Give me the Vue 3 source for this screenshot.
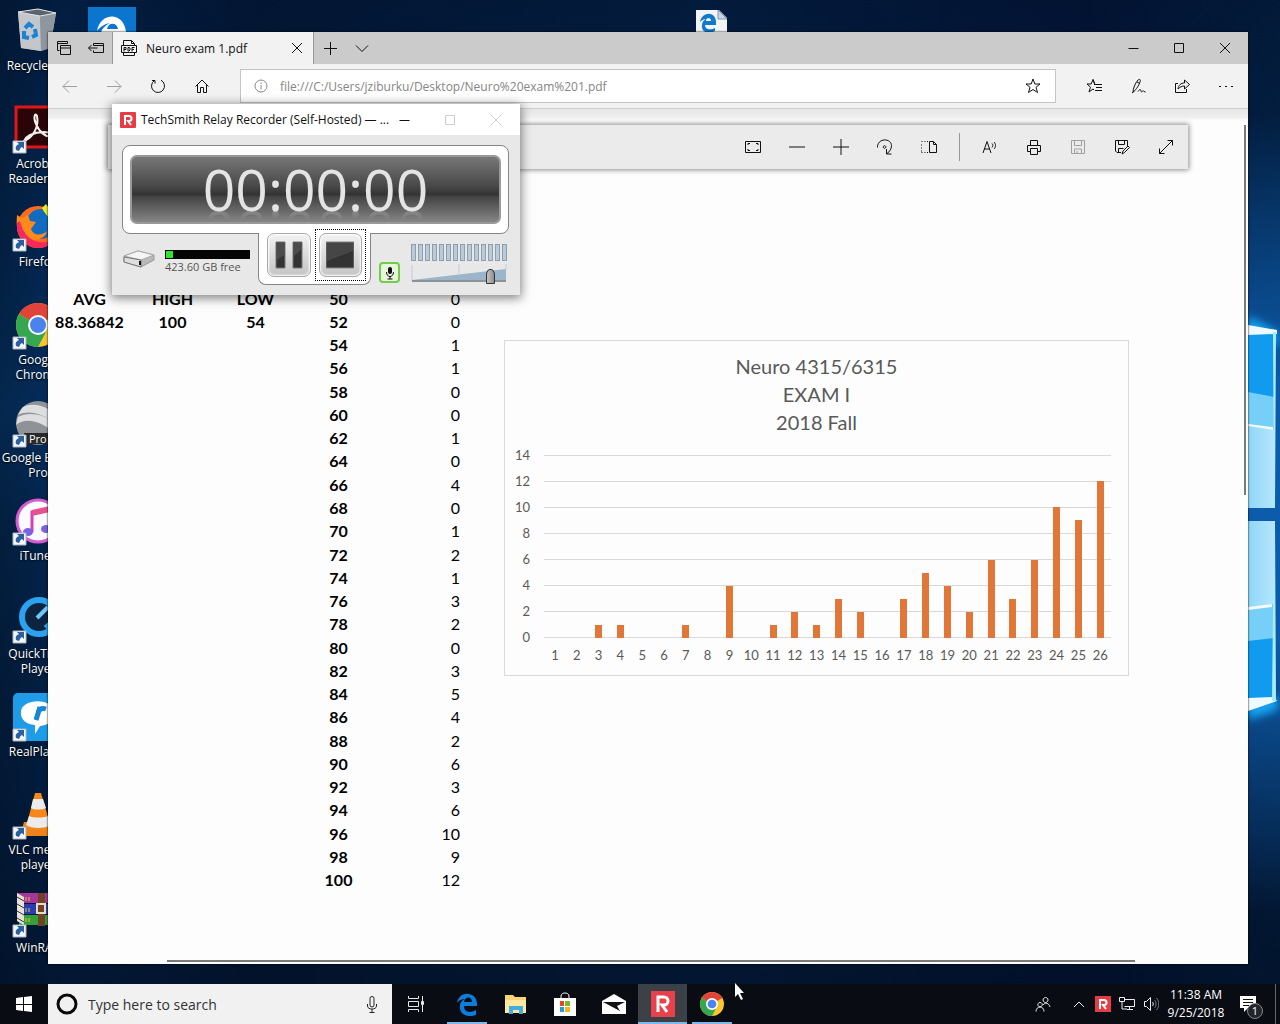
<script setup>
import { ref } from 'vue'

const address = ref('file:///C:/Users/jziburku/Desktop/Neuro%20exam%201.pdf')
const query = ref('')
const volume = ref(86)

const desktopIcons = [
  { id: 'bin', label: 'Recycle Bin', shortcut: false },
  { id: 'acrobat', label: 'Acrobat Reader DC', shortcut: true },
  { id: 'firefox', label: 'Firefox', shortcut: true },
  { id: 'chrome', label: 'Google Chrome', shortcut: true },
  { id: 'earth', label: 'Google Earth Pro', shortcut: true },
  { id: 'itunes', label: 'iTunes', shortcut: true },
  { id: 'quicktime', label: 'QuickTime Player', shortcut: true },
  { id: 'realplayer', label: 'RealPlayer', shortcut: true },
  { id: 'vlc', label: 'VLC media player', shortcut: true },
  { id: 'winrar', label: 'WinRAR', shortcut: true },
]

const tabTools = [
  { label: 'Tabs you have set aside', d: 'M3.5 10.5h-2v-9h10v2M1.5 3.5h10M4.5 5.5h10v9h-10zM4.5 8h10' },
  { label: 'Set these tabs aside', d: 'M5.5 5.5v-2h10v9h-10v-2M5.5 5.5h10M.5 8h9M3.5 5l-3 3 3 3' },
]
const newTabTools = [
  { label: 'New tab', d: 'M8.5 2v13M2 8.5h13' },
  { label: 'Show tab previews', d: 'M2 5.5l6 6 6-6' },
]
const windowTools = [
  { label: 'Minimize', d: 'M3.5 8.5h10' },
  { label: 'Maximize', d: 'M3.5 3.5h9v9h-9z' },
  { label: 'Close', d: 'M3 3l10 10M13 3L3 13' },
]
const navTools = [
  { label: 'Back', faint: true, d: 'M1 8.5h14M7 2.500L1 8.500l6 6' },
  { label: 'Forward', faint: true, d: 'M1 8.5h14M9 2.500l6 6-6 6' },
  { label: 'Refresh', d: 'M4.5 2.5A6.500 6.500 0 1 0 11 2.200M2 2.500h3v3' },
  { label: 'Home', d: 'M1.5 8.5L8 2l6.500 6.500M3.500 7v7.500h3v-5h3v5h3V7' },
]
const hubTools = [
  { label: 'Favorites', d: 'M9 6.5h7M10 9.5h6M9 12.5h7M8 6.500H9L7 1.500 5.200 6H1l3.500 3.200L3 14l4-3 1 .8M7 1.500l1.500 4.300' },
  { label: 'Add notes', d: 'M3 14.500c0-4 2-9 5-12.500 2-1.500 3 0 2 2-1 3-3 6-5 8.500l-3 2.500M7 4l2 1M8 13.500c2-3 3-2 3 0 1 1 2-2 3 0l1.500.5' },
  { label: 'Share', d: 'M4 5.500H1.500v9h11V11M4 11c.5-4 3-6 6.500-6V2l5 4.500-5 4.500V8C8 8 6 9 4 11z' },
  { label: 'Settings and more', d: 'M1 8.5h2M7 8.5h2M13 8.5h2' },
]
const pdfTools = [
  { label: 'Fit to page', d: 'M.5 2.5h15v11H.5zM3 6V4.500h2M11 4.500h2V6M13 10v1.500h-2M5 11.500H3V10' },
  { label: 'Zoom out', d: 'M0 8h16' },
  { label: 'Zoom in', d: 'M0 8h16M8 0v16' },
  { label: 'Rotate', d: 'M.5 8.500C0-1 14-1.500 14.500 6.500c0 3-1.500 6-4.500 8M9.500 10v5h5M7.500 6.700a1.300 1.300 0 1 0 .1 0z' },
  { label: 'Layout', d: 'M8.5 2.5h4l3 3v8h-7zM12.500 2.500v3h3M.5 2.500h1M3.500 2.500h1M6 2.500h1M.5 5.500v1M.5 8.500v1M.5 11.500v1M.5 13.500h1M3.500 13.500h1M6 13.500h1' },
]
const fileTools = [
  { label: 'Read aloud', d: 'M1 14L5 2.500 9 14M2.300 10h5.400M10 4.500c1 1 1 3 0 4M12 3c2 2 2 5 0 7' },
  { label: 'Print', d: 'M4.5 6V1.5h7V6M4.500 12.500h-3V6.500h13v6h-3M4.500 9.500h7v6h-7z' },
  { label: 'Save', faint: true, d: 'M1.5 1.5h13v13h-13zM4.500 1.500v5h7v-5M4.500 14.500v-4.500h7v4.500M7 12v2' },
  { label: 'Save as', d: 'M7 13.500H3l-1.500-1.500V1.500h12V7M4.500 1.500v4h6v-4M4.500 13.500V9.500h5M8 15l1-3 5-5 1.500 1.500-5 5z' },
  { label: 'Full screen', d: 'M1.500 14.500l13-13M9.500 1.500h5v5M1.500 9.500v5h5' },
]

const counts = [0, 0, 1, 1, 0, 0, 1, 0, 4, 0, 1, 2, 1, 3, 2, 0, 3, 5, 4, 2, 6, 3, 6, 10, 9, 12]
const rows = counts.map((count, i) => ({ score: 50 + i * 2, count }))
const ticks = [14, 12, 10, 8, 6, 4, 2, 0]
const axisMax = 14
</script>

<template>
  <div class="screen">
    <main class="desktop">
      <svg class="light" width="32" height="460" viewBox="0 0 32 460" aria-hidden="true">
        <defs>
          <linearGradient id="pane" x1="0" y1="0" x2="1" y2="0">
            <stop offset="0" stop-color="#8fd6f7" />
            <stop offset="1" stop-color="#b4e6fc" />
          </linearGradient>
          <filter id="soft" x="-50%" y="-50%" width="200%" height="200%"><feGaussianBlur stdDeviation="4" /></filter>
        </defs>
        <path d="M0 32l30 16v14L0 60zM0 436l30-10v-14L0 418z" fill="#19a5f5" filter="url(#soft)" />
        <path d="M0 49h27v175H0z" fill="#119bee" />
        <path d="M0 108l26 5v111H0z" fill="#75cff6" />
        <path d="M0 142l26 4v78H0z" fill="url(#pane)" />
        <path d="M0 140l25 3v3l-25-4z" fill="#f3fbff" />
        <path d="M0 237h26v177H0z" fill="#119bee" />
        <path d="M0 237h26v117l-26 3z" fill="#75cff6" />
        <path d="M0 237h26v83l-26 4z" fill="url(#pane)" />
        <path d="M0 323l24-3v3l-24 3z" fill="#f3fbff" />
        <path d="M0 41l29 5v4H26L0 51zM0 414l26-1 3 4-29 10z" fill="#effaff" />
        <path d="M25 48h3l-1 176h-1zM26 237h1l1 180h-4z" fill="#a9ecff" />
      </svg>

      <ul class="icons">
        <li v-for="item in desktopIcons" :key="item.id" class="shortcut">
          <svg class="shortcut-art" viewBox="0 0 48 48" aria-hidden="true">
            <g v-if="item.id === 'bin'">
              <path d="M4 4l20-3 18 4-6 35-9 3-20-3z" fill="#a9afb6" />
              <path d="M4 4l22 4 1 35-20-3z" fill="#c3c7cb" />
              <path d="M26 8l16-3-6 35-9 3z" fill="#8e969f" />
              <path d="M4 4l20-3 18 4-16 3z" fill="#5b636c" stroke="#e2e5e8" />
              <path d="M11 20l4-4 4 3M21 21l1 6-4 2M15 30l-5-1v-6" fill="none" stroke="#1b83d6" stroke-width="4" />
            </g>
            <g v-else-if="item.id === 'acrobat'">
              <path d="M2 1h44v40H2z" fill="#2a0406" stroke="#e0161b" stroke-width="3" />
              <path d="M10 35c10-4 15-15 13-25-2-4-4 1-1 8s9 14 16 12-8-7-22-1c-4 2-5 4-6 6z" fill="none" stroke="#f4eeee" stroke-width="2" />
            </g>
            <g v-else-if="item.id === 'firefox'">
              <circle cx="24" cy="23" r="21" fill="#ff6a1c" />
              <circle cx="27" cy="20" r="15" fill="#126bc0" />
              <path d="M3 11l5 3 6-3 2 6 6 1-5 7c3 8 12 6 16 2-1 8-14 12-22 7S2 24 3 11z" fill="#ff8a1a" />
              <path d="M3 19c-1 13 7 24 21 25 7 0 14-3 18-9-14 7-31 4-36-18z" fill="#f5295d" />
              <path d="M28 4l4-4c3 5 15 11 12 25-3-7-12-12-16-21z" fill="#e9ec1f" />
            </g>
            <g v-else-if="item.id === 'chrome'">
              <circle cx="24" cy="23" r="22" fill="#fbc72e" />
              <path d="M24 23L5 12a22 22 0 0 1 38 0z" fill="#e0433a" />
              <path d="M24 23L5 12a22 22 0 0 0 19 33l8-15z" fill="#35a751" />
              <circle cx="24" cy="23" r="10" fill="#fff" />
              <circle cx="24" cy="23" r="8" fill="#4b83ec" />
            </g>
            <g v-else-if="item.id === 'earth'">
              <circle cx="24" cy="23" r="22" fill="#8f9297" />
              <path d="M4 15c12-6 25 0 38 8l-6-13C26 4 14 3 8 8zM2 25c11-9 27-2 39 8l4-6C33 14 15 11 4 17z" fill="#dcdee0" />
              <path d="M10 33h38v11H10z" fill="#292929" />
              <text x="15" y="43" class="art-text">Pro</text>
            </g>
            <g v-else-if="item.id === 'itunes'">
              <circle cx="24" cy="23" r="21" fill="#fbfbff" stroke="#d65bd1" stroke-width="3" />
              <path d="M18 34V14l18-4v20" fill="none" stroke="#d43fb8" stroke-width="3" />
              <path d="M18 12l18-4v6l-18 4z" fill="#e8508f" />
              <ellipse cx="14" cy="34" rx="5" ry="4" fill="#7b62e0" />
              <ellipse cx="32" cy="31" rx="5" ry="4" fill="#7b62e0" />
            </g>
            <g v-else-if="item.id === 'quicktime'">
              <circle cx="25" cy="21" r="17" fill="#0c2440" stroke="#2ba2ef" stroke-width="6" />
              <path d="M23 22L34 11" stroke="#6dc5fa" stroke-width="4" />
              <path d="M32 28l10 11" stroke="#2ba2ef" stroke-width="6" />
            </g>
            <g v-else-if="item.id === 'realplayer'">
              <rect width="48" height="48" x="-1" y="-1" rx="5" fill="#1f9ce8" />
              <path d="M7 17c2-12 28-14 34 0 2 9-6 14-15 15l-5 8v-9C12 30 6 26 7 17z" fill="#fff" />
              <path d="M22 26l4-13M24 18c2-4 5-4 8-3" fill="none" stroke="#1586d5" stroke-width="5" />
            </g>
            <g v-else-if="item.id === 'vlc'">
              <path d="M10 30h28l8 14H6z" fill="#f08319" />
              <path d="M21 1h6l10 34c-6 4-20 4-25 0z" fill="#f5871b" />
              <path d="M19 7h10l3 9c-4 2-12 2-15 0zM15 24c5 2 14 2 19 0l3 9c-6 4-20 4-25 0z" fill="#ebebea" />
            </g>
            <g v-else>
              <path d="M3 3h42v10H3z" fill="#a8369a" />
              <path d="M5 14h42v10H5z" fill="#283eb0" />
              <path d="M5 25h42v10H5z" fill="#35a03a" />
              <path d="M3 3l7 4v28l-7-4z" fill="#e8e3d8" />
              <path d="M3 7l7 4M3 14l7 4M3 21l7 4M3 28l7 4" stroke="#333" />
              <path d="M12 7v4M15 7v4M12 18v4M15 18v4M12 28v4M15 28v4" stroke="#e5c34a" />
              <path d="M24 3h7v33h-7z" fill="#704325" />
              <path d="M23 14h8v9h-8z" fill="none" stroke="#e7ddc5" stroke-width="2" />
            </g>
            <g v-if="item.shortcut">
              <path d="M-1 35h13v12H-1z" fill="#f3f6fa" stroke="#aab4c2" />
              <path d="M2 44c-1-4 1-5 3-6l-2-2h7v7l-2-2c-2 1-2 2-3 4z" fill="#2c5f9e" />
            </g>
          </svg>
          <span class="shortcut-label">{{ item.label }}</span>
        </li>
      </ul>

      <svg class="tile-edge" width="48" height="48" viewBox="0 0 48 48" aria-hidden="true">
        <path d="M0 0h48v48H0z" fill="#0c76cf" />
        <path d="M9 24C12 5 36 4 38 25v4H18c1 10 12 10 18 5v6c-14 6-26 0-23-14 1-5 5-8 9-10-6 1-10 4-13 8zm10-2h11c-1-7-10-7-11 0z" fill="#fff" />
      </svg>
      <svg class="tile-file" width="31" height="40" viewBox="0 0 31 40" aria-hidden="true">
        <path d="M0 0h23l8 8v32H0z" fill="#f3f4f6" />
        <path d="M22 0v9h9z" fill="#c3d5e6" stroke="#8299b0" />
        <path d="M4 12C6 1 20 1 20 12v3H9c0 5 6 5 10 3v3c-7 4-14 1-13-6 0-3 2-5 4-6-2 0-4 1-6 3zm6-1h5c0-4-5-4-5 0z" fill="#1278cc" />
      </svg>

      <section class="browser" aria-label="Microsoft Edge">
        <header class="tabbar">
          <button v-for="t in tabTools" :key="t.label" class="tool slim" :aria-label="t.label">
            <svg class="glyph" viewBox="0 0 16 16"><path :d="t.d" /></svg>
          </button>
          <div class="tab">
            <svg class="glyph" viewBox="0 0 16 16" aria-hidden="true">
              <path d="M2.500 5V.5h8l3 3V5M10.500.5v3h3M2.500 13v2.500h11V13M.5 5.500h15v7H.5z" />
              <path d="M3 11.500v-4h2v2H3M7 7.500v3.500h1l1-1V8L8 7.500zM11 11.500v-4h2.500M11 9.500h2" />
            </svg>
            <span class="tab-title">Neuro exam 1.pdf</span>
            <button class="tab-close" aria-label="Close tab">
              <svg class="glyph" viewBox="0 0 16 16"><path d="M3 3l10 10M13 3L3 13" /></svg>
            </button>
          </div>
          <button v-for="t in newTabTools" :key="t.label" class="tool slim" :aria-label="t.label">
            <svg class="glyph" viewBox="0 0 16 16"><path :d="t.d" /></svg>
          </button>
          <div class="spacer"></div>
          <button v-for="t in windowTools" :key="t.label" class="tool wide" :aria-label="t.label">
            <svg class="glyph" viewBox="0 0 16 16"><path :d="t.d" /></svg>
          </button>
        </header>

        <nav class="navbar">
          <button v-for="t in navTools" :key="t.label" class="tool" :class="{ faint: t.faint }" :aria-label="t.label">
            <svg class="glyph" viewBox="0 0 16 16"><path :d="t.d" /></svg>
          </button>
          <div class="address">
            <svg class="info" viewBox="0 0 14 14" aria-hidden="true">
              <circle cx="7" cy="7" r="6" /><path d="M7 6v4.500M7 3.500v1.500" />
            </svg>
            <input v-model="address" class="address-input" aria-label="Address" spellcheck="false" />
            <button class="tool" aria-label="Add to favorites">
              <svg class="glyph" viewBox="0 0 16 16"><path d="M8 1l1.800 5H15l-4 3.300 1.500 5.200L8 11.500l-4.500 3L5 9.300 1 6h5.200z" /></svg>
            </button>
          </div>
          <button v-for="t in hubTools" :key="t.label" class="tool" :aria-label="t.label">
            <svg class="glyph" viewBox="0 0 16 16"><path :d="t.d" /></svg>
          </button>
        </nav>

        <div class="page">
          <div class="pdfbar">
            <button v-for="t in pdfTools" :key="t.label" class="tool" :aria-label="t.label">
              <svg class="glyph" viewBox="0 0 16 16"><path :d="t.d" /></svg>
            </button>
            <span class="divider"></span>
            <button v-for="t in fileTools" :key="t.label" class="tool" :class="{ faint: t.faint }" :aria-label="t.label">
              <svg class="glyph" viewBox="0 0 16 16"><path :d="t.d" /></svg>
            </button>
          </div>

          <div class="sheet">
            <table class="scores">
              <tbody>
                <tr v-for="(r, i) in rows" :key="r.score">
                  <th>{{ i === 0 ? 'AVG' : i === 1 ? '88.36842' : '' }}</th>
                  <th>{{ i === 0 ? 'HIGH' : i === 1 ? '100' : '' }}</th>
                  <th>{{ i === 0 ? 'LOW' : i === 1 ? '54' : '' }}</th>
                  <th>{{ r.score }}</th>
                  <td>{{ r.count }}</td>
                </tr>
              </tbody>
            </table>

            <figure class="chart">
              <figcaption class="chart-title">Neuro 4315/6315<br />EXAM I<br />2018 Fall</figcaption>
              <div class="plot">
                <div class="y-axis"><span v-for="t in ticks" :key="t">{{ t }}</span></div>
                <div class="area">
                  <div class="gridlines"><i v-for="t in ticks" :key="t"></i></div>
                  <div class="bars">
                    <div v-for="(c, i) in counts" :key="i" class="slot">
                      <div class="bar" :style="{ height: (c / axisMax) * 100 + '%' }"></div>
                    </div>
                  </div>
                </div>
                <div class="x-axis"><span v-for="(c, i) in counts" :key="i">{{ i + 1 }}</span></div>
              </div>
            </figure>
          </div>
          <div class="scroll-v"></div>
          <div class="scroll-h"></div>
        </div>
      </section>

      <section class="recorder" aria-label="TechSmith Relay Recorder">
        <header class="rec-title">
          <svg class="rec-logo" viewBox="0 0 16 16" aria-hidden="true">
            <rect width="16" height="16" rx="1" fill="#e63c46" />
            <path d="M5 13V4h4a2.500 2.500 0 0 1 0 5H8l3 4" fill="none" stroke="#fff" stroke-width="2" />
          </svg>
          <span class="rec-name">TechSmith Relay Recorder (Self-Hosted) — ...</span>
          <button
            v-for="(t, i) in windowTools"
            :key="t.label"
            class="tool wide"
            :class="{ off: i > 0 }"
            :aria-label="t.label"
          >
            <svg class="glyph" viewBox="0 0 16 16"><path :d="t.d" /></svg>
          </button>
        </header>
        <div class="rec-body">
          <div class="rec-panel">
            <div class="display"><span class="time">00:00:00</span></div>
          </div>
          <div class="rec-row">
            <div class="disk">
              <svg class="drive" viewBox="0 0 34 22" aria-hidden="true">
                <path d="M2 8L16 3l16 4v5l-13 7-17-5z" fill="#b9b9b9" stroke="#999" />
                <path d="M2 8l14-5 16 4-13 5z" fill="#f5f5f5" stroke="#aaa" />
                <path d="M2 9l17 3v7L2 14z" fill="#dedede" stroke="#777" />
                <path d="M18 13v4" stroke="#111" stroke-width="2" />
              </svg>
              <div class="disk-info">
                <div class="disk-bar"><div class="disk-used"></div></div>
                <span class="disk-text">423.60 GB free</span>
              </div>
            </div>
            <div class="controls">
              <button class="key" aria-label="Pause">
                <svg viewBox="0 0 28 28" width="28" height="28">
                  <path d="M1 1h9v26H1zM18 1h9v26h-9z" fill="#333" stroke="#777" />
                  <path d="M2 2h7v12l-7 5zM19 2h7v7l-7 6z" fill="#4b4b4b" />
                </svg>
              </button>
              <button class="key focused" aria-label="Stop">
                <svg viewBox="0 0 28 28" width="28" height="28">
                  <path d="M0 1h28v26H0z" fill="#333" stroke="#888" />
                  <path d="M1 2h26v8L1 20z" fill="#464646" />
                </svg>
              </button>
            </div>
            <div class="sound">
              <button class="mic" aria-label="Microphone">
                <svg viewBox="0 0 14 14" width="14" height="14">
                  <rect x="5" y="1" width="4" height="7" rx="2" fill="#111" />
                  <path d="M3.500 6c0 6 7 6 7 0M7 10v3M4.500 13h5" fill="none" stroke="#111" />
                </svg>
              </button>
              <div class="levels">
                <div class="meter"><i v-for="n in 14" :key="n"></i></div>
                <div class="fader">
                  <svg class="wedge" viewBox="0 0 96 20" preserveAspectRatio="none" aria-hidden="true">
                    <path d="M1 16L95 5v11z" fill="#9db5ca" />
                    <path d="M1 1v16M48 0v10M95 0v5" stroke="#c3ccd4" />
                    <path d="M1 17h94" stroke="#8d9297" stroke-width="2" />
                  </svg>
                  <input v-model="volume" class="volume" type="range" min="0" max="100" aria-label="Volume" />
                </div>
              </div>
            </div>
          </div>
        </div>
      </section>
    </main>

    <footer class="taskbar">
      <button class="task" aria-label="Start">
        <svg width="16" height="16" viewBox="0 0 16 16"><path d="M0 2l7-1v7H0zM8 1l8-1v8H8zM0 9h7v6l-7-1zM8 9h8v7l-8-1z" fill="#fff" /></svg>
      </button>
      <div class="search">
        <svg width="22" height="22" viewBox="0 0 22 22" aria-hidden="true"><circle cx="11" cy="11" r="9" fill="none" stroke="#0a0a0a" stroke-width="3" /></svg>
        <input v-model="query" class="search-input" placeholder="Type here to search" aria-label="Search" />
        <svg width="14" height="18" viewBox="0 0 14 18" aria-hidden="true">
          <path d="M5 3.500a2 2 0 0 1 4 0V10a2 2 0 0 1-4 0zM2.500 9v2c0 4 9 4 9 0V9M7 14v3.500M4.500 17.500h5" fill="none" stroke="#222" />
        </svg>
      </div>
      <button class="task" aria-label="Task view">
        <svg width="18" height="18" viewBox="0 0 18 18"><path d="M1.500 1v2.500h10V1M1.500 17v-2.500h10V17M1.500 6.500h10v5h-10zM15.500 1v16M14.500 6.500h2v3h-2z" fill="none" stroke="#e8e8e8" /></svg>
      </button>
      <div class="apps">
        <button class="app open" aria-label="Microsoft Edge">
          <svg width="24" height="24" viewBox="0 0 24 24">
            <path d="M2 11C4-2 22-1 22 12v2H9c0 7 7 7 12 4v5C13 26 4 23 5 14c0-4 3-6 5-7-3 0-6 1-8 4zm7-1h8c0-6-7-6-8 0z" fill="#0d7ddb" />
          </svg>
        </button>
        <button class="app" aria-label="File Explorer">
          <svg width="24" height="24" viewBox="0 0 24 24">
            <path d="M1 3h8l2 2h11v16H1z" fill="#f7d775" /><path d="M1 8h21v13H1z" fill="#fce89f" />
            <path d="M5 22v-8h14v8h-4v-4H9v4z" fill="#45acdf" />
          </svg>
        </button>
        <button class="app" aria-label="Microsoft Store">
          <svg width="24" height="24" viewBox="0 0 24 24">
            <path d="M8 7V4c0-4 8-4 8 0v3" fill="none" stroke="#fff" /><path d="M1 6h22v18H1z" fill="#fff" />
            <path d="M7 9h4v5H7z" fill="#e8452c" /><path d="M12 9h5v5h-5z" fill="#7db928" />
            <path d="M7 15h4v5H7z" fill="#1b9fe0" /><path d="M12 15h5v5h-5z" fill="#f5b616" />
          </svg>
        </button>
        <button class="app" aria-label="Mail">
          <svg width="24" height="24" viewBox="0 0 24 24"><path d="M0 9l12-7 12 7v13H0z" fill="#fff" /><path d="M1 10h22l-8 4 3 5z" fill="#101217" /></svg>
        </button>
        <button class="app open active" aria-label="TechSmith Relay Recorder">
          <svg width="24" height="26" viewBox="0 0 24 26"><path d="M0 0h24v26H0z" fill="#e8414c" /><path d="M7 21V6h6a4 4 0 0 1 0 8h-2l5 7" fill="none" stroke="#fff" stroke-width="3" /></svg>
        </button>
        <button class="app open" aria-label="Google Chrome">
          <svg width="24" height="24" viewBox="2 1 44 44">
            <circle cx="24" cy="23" r="22" fill="#fbc72e" />
            <path d="M24 23L5 12a22 22 0 0 1 38 0z" fill="#e0433a" />
            <path d="M24 23L5 12a22 22 0 0 0 19 33l8-15z" fill="#35a751" />
            <circle cx="24" cy="23" r="11" fill="#fff" /><circle cx="24" cy="23" r="8" fill="#4b83ec" />
          </svg>
        </button>
      </div>
      <div class="spacer"></div>
      <div class="tray">
        <button class="tray-item people" aria-label="People">
          <svg width="16" height="16" viewBox="0 0 16 16"><path d="M10.500 1.500a2.500 2.500 0 1 0 .1 0zM8 9c2-3 6-2 7 2M5 6.500a2.200 2.200 0 1 0 .1 0zM1 15.500c0-6 8-6 8 0" fill="none" stroke="#eee" /></svg>
        </button>
        <button class="tray-item" aria-label="Show hidden icons">
          <svg width="12" height="12" viewBox="0 0 12 12"><path d="M1 9l5-5 5 5" fill="none" stroke="#eee" /></svg>
        </button>
        <button class="tray-item" aria-label="TechSmith Relay">
          <svg width="16" height="16" viewBox="0 0 16 16"><path d="M0 0h16v16H0z" fill="#e63c46" /><path d="M5 13V4h4a2.500 2.500 0 0 1 0 5H8l3 4" fill="none" stroke="#fff" stroke-width="2" /></svg>
        </button>
        <button class="tray-item" aria-label="Network">
          <svg width="16" height="16" viewBox="0 0 16 16"><path d="M5.500 3.500h10v7h-10M8 13.500h6M10.500 11v3M.5 1.500h5v4h-5zM3 6v7h5" fill="none" stroke="#eee" /></svg>
        </button>
        <button class="tray-item" aria-label="Volume">
          <svg width="16" height="16" viewBox="0 0 16 16"><path d="M1.500 5.500h2l4-4v13l-4-4h-2zM9.500 6c1 1 1 3 0 4" fill="none" stroke="#eee" /><path d="M11.500 4c2 2 2 6 0 8M13.500 2c3 3 3 9 0 12" fill="none" stroke="#777" /></svg>
        </button>
        <time class="clock" datetime="2018-09-25T11:38">11:38 AM<br />9/25/2018</time>
        <button class="notice" aria-label="Notifications">
          <svg width="18" height="18" viewBox="0 0 18 18"><path d="M1 1h16v12H9l-4 4v-4H1z" fill="#fff" /><path d="M4 4.500h10M4 7.500h10M4 10.500h6" stroke="#111" /></svg>
          <span class="badge">1</span>
        </button>
      </div>
      <svg class="cursor" width="12" height="18" viewBox="0 0 12 18" aria-hidden="true"><path d="M1 0v14l3-3 3 6 2-1-3-6h4z" fill="#fff" /></svg>
    </footer>
  </div>
</template>

<style>
body {
  margin: 0;
  background: #03132c;
}
</style>

<style scoped>
.screen {
  display: flex;
  flex-direction: column;
  min-height: 100vh;
  overflow: hidden;
  font-family: "Open Sans", "Noto Sans", sans-serif;
  font-size: 12px;
  color: #111;
}
.screen * {
  box-sizing: border-box;
}
button {
  padding: 0;
  border: 0;
  background: none;
  color: inherit;
  font: inherit;
}
input {
  font: inherit;
}
svg {
  flex: none;
}
.spacer {
  flex: 1;
}

/* Desktop */
.desktop {
  position: relative;
  flex: 1;
  display: flex;
  padding: 32px 32px 20px 48px;
  background:
    radial-gradient(ellipse 420px 400px at 100% 515px, #0d5cab 30%, rgba(10, 70, 140, 0) 100%),
    linear-gradient(180deg, rgba(2, 15, 40, .5) 0, rgba(3, 32, 75, .2) 28%, rgba(6, 50, 100, .4) 42%, rgba(3, 24, 55, .3) 55%, rgba(2, 14, 35, .7) 100%),
    linear-gradient(90deg, #03203f 0, #042b5a 5%, #031b3c 20%, #04264f 55%, #03153a 85%, #032448 100%);
}
.light {
  position: absolute;
  right: 0;
  top: 284px;
}
.icons {
  position: absolute;
  left: 0;
  top: 8px;
  width: 76px;
  margin: 0;
  padding: 0;
  list-style: none;
}
.shortcut {
  display: flex;
  flex-direction: column;
  align-items: center;
  gap: 2px;
  height: 98px;
}
.shortcut-art {
  width: 48px;
  height: 48px;
  overflow: visible;
}
.shortcut-label {
  color: #fff;
  line-height: 15px;
  text-align: center;
  text-shadow: 0 1px 2px #000;
}
.art-text {
  font-size: 11px;
  fill: #fff;
}
.tile-edge {
  position: absolute;
  left: 88px;
  top: 7px;
}
.tile-file {
  position: absolute;
  left: 696px;
  top: 10px;
}

/* Shared icon buttons */
.tool {
  display: flex;
  flex: none;
  align-items: center;
  justify-content: center;
  width: 44px;
  height: 100%;
}
.slim {
  width: 32px;
}
.wide {
  width: 46px;
}
.glyph {
  width: 16px;
  height: 16px;
  fill: none;
  stroke: #111;
  overflow: visible;
}
.faint .glyph {
  stroke: #a0a0a0;
}
.off .glyph {
  stroke: #ccc;
}

/* Browser */
.browser {
  position: relative;
  flex: 1;
  display: flex;
  flex-direction: column;
  min-width: 0;
  background: #fdfdfd;
  box-shadow: 0 0 2px #000;
}
.tabbar {
  display: flex;
  height: 32px;
  background: #cbcbcb;
}
.tab {
  display: flex;
  align-items: center;
  gap: 9px;
  width: 202px;
  padding: 0 8px;
  border: solid #999;
  border-width: 0 1px;
  background: #f2f2f2;
}
.tab-title {
  flex: 1;
  white-space: nowrap;
}
.tab-close {
  display: flex;
}
.navbar {
  display: flex;
  align-items: center;
  height: 45px;
  border-bottom: 1px solid #cfcfcf;
  background: #f2f2f2;
}
.address {
  display: flex;
  flex: 1;
  align-items: center;
  height: 34px;
  margin: 0 16px;
  padding-left: 13px;
  border: 1px solid #c4c4c4;
  background: #fff;
}
.info {
  width: 14px;
  height: 14px;
  fill: none;
  stroke: #8a8a8a;
}
.address-input {
  flex: 1;
  min-width: 0;
  margin-left: 12px;
  padding: 0;
  border: 0;
  outline: 0;
  background: none;
  color: #858585;
}
.page {
  position: relative;
  flex: 1;
  background: linear-gradient(#e6e6e6, #f0f0f0 9px, #fdfdfd 11px);
}
.pdfbar {
  display: flex;
  align-items: center;
  justify-content: flex-end;
  height: 44px;
  margin: 16px 60px 0;
  background: #ebebeb;
  box-shadow: 0 0 5px 1px rgba(0, 0, 0, .45);
}
.divider {
  width: 1px;
  height: 28px;
  margin: 0 8px;
  background: #999;
}
.sheet {
  display: flex;
  align-items: flex-start;
  padding: 118px 119px 60px 0;
  font-family: Lato, "Open Sans", sans-serif;
}
.scores {
  flex: none;
  width: 412px;
  height: 605px;
  table-layout: fixed;
  border-collapse: collapse;
  font-size: 16px;
  line-height: 20px;
  color: #000;
}
.scores th,
.scores td {
  width: 83px;
  padding: 0;
  text-align: center;
}
.scores td {
  width: 80px;
  text-align: right;
}
.chart {
  flex: 1;
  min-width: 0;
  margin: 53px 0 0 44px;
  padding: 11px 0 8px;
  border: 1px solid #dadada;
  color: #595959;
}
.chart-title {
  font-size: 20px;
  line-height: 28px;
  text-align: center;
}
.plot {
  display: grid;
  grid-template-columns: 19px 1fr;
  column-gap: 14px;
  margin: 6px 17px 0 6px;
  font-size: 13px;
}
.y-axis {
  display: flex;
  flex-direction: column;
  height: 201px;
  line-height: 26px;
  text-align: right;
}
.area {
  display: grid;
  padding: 13px 0 5px;
}
.gridlines,
.bars {
  display: flex;
  grid-area: 1 / 1;
}
.gridlines {
  flex-direction: column;
  justify-content: space-between;
}
.gridlines i {
  height: 1px;
  background: #d9d9d9;
}
.slot {
  display: flex;
  flex: 1;
  align-items: flex-end;
  justify-content: center;
}
.bar {
  width: 7px;
  background: #e07638;
}
.x-axis {
  display: flex;
  grid-column: 2;
  line-height: 24px;
}
.x-axis span {
  flex: 1 0 0;
  min-width: 0;
  text-align: center;
}
.scroll-v {
  position: absolute;
  right: 2px;
  top: 16px;
  width: 2px;
  height: 370px;
  background: #7a7a7a;
}
.scroll-h {
  position: absolute;
  left: 119px;
  right: 113px;
  bottom: 2px;
  height: 2px;
  background: #7a7a7a;
}

/* Recorder */
.recorder {
  position: absolute;
  left: 112px;
  top: 104px;
  width: 408px;
  background: #e8e8e8;
  box-shadow: 0 2px 10px 1px rgba(0, 0, 0, .5);
}
.rec-title {
  display: flex;
  align-items: center;
  height: 31px;
  padding: 0 1px 0 8px;
  background: #fff;
}
.rec-logo {
  width: 16px;
  height: 16px;
}
.rec-name {
  flex: 1;
  min-width: 0;
  margin-left: 5px;
  white-space: nowrap;
}
.rec-body {
  padding: 10px 11px 10px 10px;
}
.rec-panel {
  padding: 9px 7px;
  border: 1px solid #858585;
  border-radius: 8px;
  background: #fff;
}
.display {
  height: 69px;
  border: 2px solid #999;
  border-radius: 7px;
  background: linear-gradient(#777, #484848 45%, #333 58%, #444 61%, #858585);
  text-align: center;
}
.time {
  display: block;
  height: 64px;
  color: #e4e4e4;
  font-size: 57px;
  line-height: 64px;
  -webkit-box-reflect: below -20px linear-gradient(transparent 70%, rgba(255, 255, 255, .3) 88%, transparent 88%);
}
.rec-row {
  display: flex;
}
.disk {
  display: flex;
  gap: 9px;
  width: 136px;
  padding: 14px 8px 0 0;
}
.drive {
  width: 34px;
  height: 22px;
}
.disk-info {
  flex: 1;
}
.disk-bar {
  height: 9px;
  margin-top: 2px;
  padding: 1px;
  background: #050505;
}
.disk-used {
  width: 8%;
  height: 100%;
  background: #2ee62e;
}
.disk-text {
  display: block;
  color: #555;
  font-size: 11px;
  line-height: 16px;
  white-space: nowrap;
}
.controls {
  display: flex;
  gap: 8px;
  width: 113px;
  height: 52px;
  margin-top: -1px;
  padding: 0 8px;
  border: 1px solid #858585;
  border-top: 0;
  border-radius: 0 0 8px 8px;
  background: #fff;
}
.key {
  position: relative;
  display: flex;
  align-items: center;
  justify-content: center;
  width: 44px;
  height: 44px;
  border: 1px solid #aaa;
  border-radius: 7px;
  background: linear-gradient(#f2f2f2, #c4c4c4);
  box-shadow: inset 0 0 2px 1px #fff;
}
.focused::after {
  position: absolute;
  inset: -5px;
  border: 1px dotted #000;
  content: "";
}
.sound {
  display: flex;
  flex: 1;
  gap: 11px;
  padding: 10px 2px 0 8px;
}
.mic {
  display: flex;
  align-items: center;
  justify-content: center;
  width: 21px;
  height: 21px;
  margin-top: 18px;
  border: 2px solid #6fce45;
  border-radius: 4px;
  background: #e7f6dd;
}
.levels {
  flex: 1;
}
.meter {
  display: flex;
  gap: 2px;
  height: 17px;
}
.meter i {
  flex: 1;
  border: 1px solid #8d9eae;
  background: #b9cad8;
}
.fader {
  display: grid;
  height: 20px;
  margin-top: 3px;
}
.wedge {
  grid-area: 1 / 1;
  width: 100%;
  height: 20px;
}
.volume {
  grid-area: 1 / 1;
  width: 100%;
  height: 20px;
  margin: 0;
  appearance: none;
  background: none;
}
.volume::-webkit-slider-thumb {
  width: 9px;
  height: 15px;
  margin-top: 4px;
  appearance: none;
  border: 1px solid #333;
  border-radius: 4px 4px 1px 1px / 6px 6px 1px 1px;
  background: linear-gradient(90deg, #c4c4c4, #8e8e8e);
}

/* Taskbar */
.taskbar {
  position: relative;
  display: flex;
  height: 40px;
  background: #090c13;
  color: #fff;
}
.task {
  display: flex;
  align-items: center;
  justify-content: center;
  width: 48px;
}
.search {
  display: flex;
  align-items: center;
  width: 344px;
  padding: 0 13px 0 8px;
  background: #f1f1f1;
}
.search-input {
  flex: 1;
  min-width: 0;
  margin-left: 10px;
  padding: 0;
  border: 0;
  outline: 0;
  background: none;
  font-size: 14px;
}
.search-input::placeholder {
  color: #333;
  opacity: 1;
}
.apps {
  display: flex;
  padding-left: 2px;
}
.app {
  display: flex;
  align-items: center;
  justify-content: center;
  width: 49px;
  background: linear-gradient(#7db9e8, #7db9e8) center bottom / 0 2px no-repeat;
}
.open {
  background-size: 40px 2px;
}
.active {
  background-color: #3b4147;
  background-size: 100% 2px;
}
.tray {
  display: flex;
  align-items: center;
  margin-right: 4px;
  border-right: 1px solid #666;
}
.tray-item {
  display: flex;
  align-items: center;
  justify-content: center;
  width: 24px;
  height: 40px;
}
.people {
  margin-right: 12px;
}
.clock {
  width: 66px;
  line-height: 18px;
  text-align: center;
  white-space: nowrap;
}
.notice {
  position: relative;
  display: flex;
  align-items: center;
  width: 46px;
  height: 40px;
  padding-left: 10px;
}
.badge {
  position: absolute;
  left: 18px;
  top: 19px;
  width: 16px;
  height: 16px;
  border: 1px solid #888;
  border-radius: 8px;
  background: #22262c;
  font-size: 11px;
  line-height: 14px;
  text-align: center;
}
.cursor {
  position: absolute;
  left: 734px;
  top: -1px;
}
</style>
